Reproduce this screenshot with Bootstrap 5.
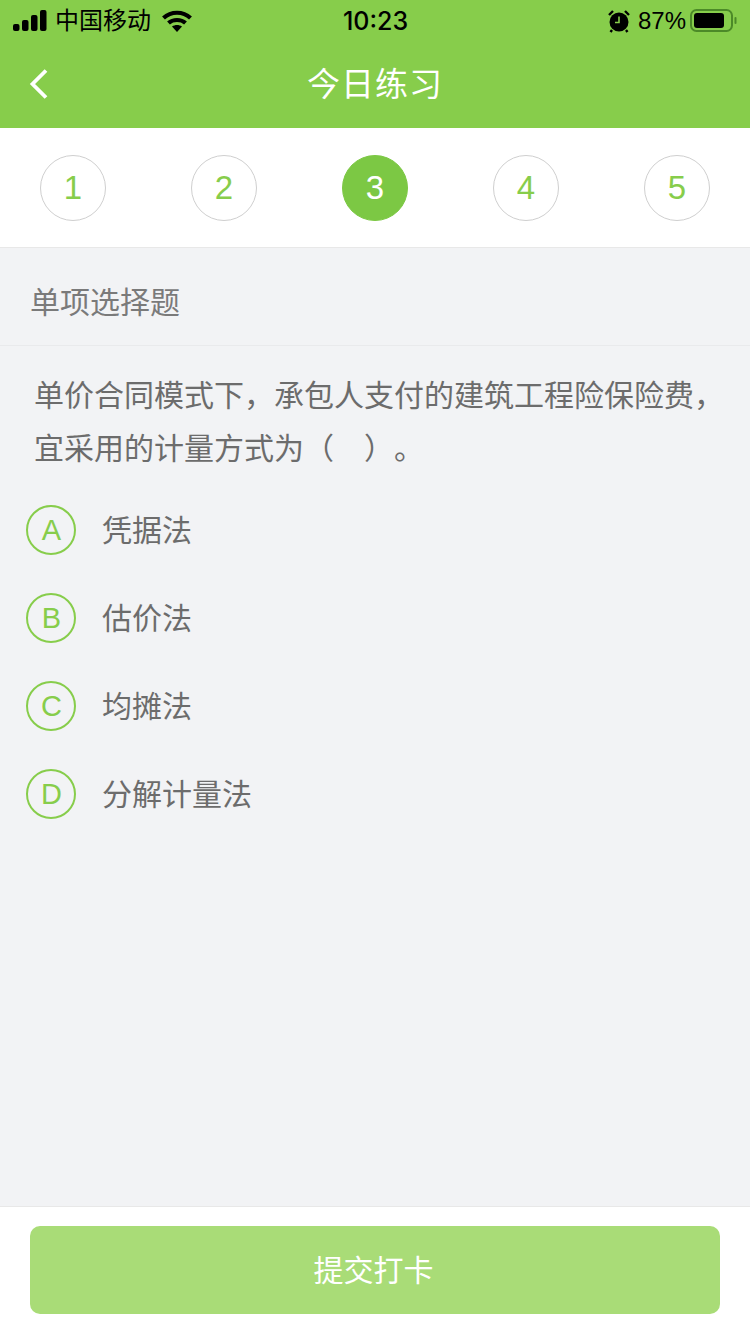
<!DOCTYPE html>
<html lang="zh">
<head>
    <meta charset="UTF-8" />
    <title>今日练习</title>
    <meta name="viewport" content="width=device-width, initial-scale=1" />
    <link href="https://cdn.jsdelivr.net/npm/bootstrap@5.3.0/dist/css/bootstrap.min.css" rel="stylesheet" />
    <style>
        html, body { height: 1334px; }
        body { width: 750px; background: #f2f3f5; font-family: "Liberation Sans", "Noto Sans CJK SC", sans-serif; overflow: hidden; text-spacing-trim: space-all; }
        .topbar { background: #87cd4b; height: 128px; }
        .statusbar { height: 42px; padding: 0 12px 0 13px; color: #000; font-size: 24px; line-height: 42px; }
        .status-side { width: 290px; }
        .status-time { font-size: 25px; font-weight: 500; font-family: "Inter", "Liberation Sans", sans-serif; }
        .wifi-icon { margin-left: 11px; }
        .titlebar { height: 86px; }
        .title-text { color: #fff; font-size: 33px; line-height: 86px; letter-spacing: 1px; }
        .back-btn { position: absolute; left: 29px; top: 26px; }
        .stepbar { height: 120px; background: #fff; border-bottom: 1px solid #e8e8e8; padding: 27px 40px 0; }
        .step-dot { width: 66px; height: 66px; border: 1px solid #cfcfcf; border-radius: 50%; color: #87cd4b; font-size: 33px; }
        .step-dot.active { background: #7cc844; border-color: #7cc844; color: #fff; }
        .qtype { height: 98px; padding: 0 30px; font-size: 30px; line-height: 109px; color: #7a7a7a; border-bottom: 1px solid #e9eaec; }
        .qtext { padding: 23px 30px 0 34px; font-size: 30px; line-height: 53px; color: #6c6c6c; white-space: nowrap; }
        .opts { padding: 11px 0 0 26px; }
        .opt-row { height: 88px; gap: 26px; }
        .opt-ball { width: 50px; height: 50px; border: 2px solid #87cd4b; border-radius: 50%; color: #87cd4b; font-size: 29px; padding: 2px 0 0 1px; }
        .opt-label { font-size: 30px; color: #6c6c6c; }
        .bottombar { height: 128px; background: #fff; border-top: 1px solid #e8e8e8; padding: 19px 30px 0; }
        .submit-btn { width: 690px; height: 88px; background: #a9dc77; border: 0; border-radius: 10px; color: #fff; font-size: 30px; padding: 0 3px 0 0; }
    </style>
</head>
<body class="d-flex flex-column">
    <div class="topbar position-relative">
        <div class="statusbar d-flex justify-content-between align-items-center">
            <div class="status-side d-flex align-items-center">
                <svg width="34" height="22" viewBox="0 0 34 22" fill="#000"><rect x="0" y="14" width="6.500" height="7" rx="2"/><rect x="9" y="10" width="6.500" height="11" rx="2"/><rect x="18" y="5" width="6.500" height="16" rx="2"/><rect x="27" y="0" width="6.500" height="21" rx="2"/></svg>
                <span class="ms-2">中国移动</span>
                <svg class="wifi-icon" width="30" height="22" viewBox="0 0 30 22"><path d="M1.500 8C9 1 21 1 28.500 8M6.500 13C11 9 19 9 23.500 13" fill="none" stroke="#000" stroke-width="4.200"/><path d="M10 16.500C13 14.500 17 14.500 20 16.500L15 22Z" fill="#000"/></svg>
            </div>
            <div class="status-time">10:23</div>
            <div class="status-side d-flex align-items-center justify-content-end">
                <svg width="22" height="24" viewBox="0 0 22 24"><circle cx="11" cy="13" r="9.500" fill="#000"/><path d="M11 7.500V13.500H7" fill="none" stroke="#87cd4b" stroke-width="1.600"/><path d="M1 6L5 2M21 6L17 2M4 21L2.500 23M18 21L19.500 23" stroke="#000" stroke-width="2.400" fill="none"/></svg>
                <span class="ms-2">87%</span>
                <svg class="ms-1" width="48" height="24" viewBox="0 0 48 24"><rect x="1" y="1" width="41" height="21" rx="5.500" fill="none" stroke="#4c8a28" stroke-width="2"/><rect x="4" y="4" width="30" height="15" rx="3" fill="#000"/><rect x="44.500" y="8" width="2" height="7" rx="1" fill="#4c8a28"/></svg>
            </div>
        </div>
        <div class="titlebar position-relative text-center">
            <svg class="back-btn" width="20" height="32" viewBox="0 0 20 32"><path d="M17 2.500L3.500 16L17 29.500" fill="none" stroke="#fff" stroke-width="3.800"/></svg>
            <div class="title-text">今日练习</div>
        </div>
    </div>

    <div class="stepbar d-flex justify-content-between">
        <div class="step-dot d-flex align-items-center justify-content-center">1</div>
        <div class="step-dot d-flex align-items-center justify-content-center">2</div>
        <div class="step-dot active d-flex align-items-center justify-content-center">3</div>
        <div class="step-dot d-flex align-items-center justify-content-center">4</div>
        <div class="step-dot d-flex align-items-center justify-content-center">5</div>
    </div>

    <div class="flex-grow-1">
        <div class="qtype">单项选择题</div>
        <div class="qtext">单价合同模式下，承包人支付的建筑工程险保险费，<br />宜采用的计量方式为（　）。</div>
        <div class="opts">
            <div class="opt-row d-flex align-items-center"><div class="opt-ball d-flex align-items-center justify-content-center">A</div><div class="opt-label">凭据法</div></div>
            <div class="opt-row d-flex align-items-center"><div class="opt-ball d-flex align-items-center justify-content-center">B</div><div class="opt-label">估价法</div></div>
            <div class="opt-row d-flex align-items-center"><div class="opt-ball d-flex align-items-center justify-content-center">C</div><div class="opt-label">均摊法</div></div>
            <div class="opt-row d-flex align-items-center"><div class="opt-ball d-flex align-items-center justify-content-center">D</div><div class="opt-label">分解计量法</div></div>
        </div>
    </div>

    <div class="bottombar">
        <button type="button" class="btn submit-btn">提交打卡</button>
    </div>
    <script src="https://cdn.jsdelivr.net/npm/bootstrap@5.3.0/dist/js/bootstrap.bundle.min.js"></script>
</body>
</html>
